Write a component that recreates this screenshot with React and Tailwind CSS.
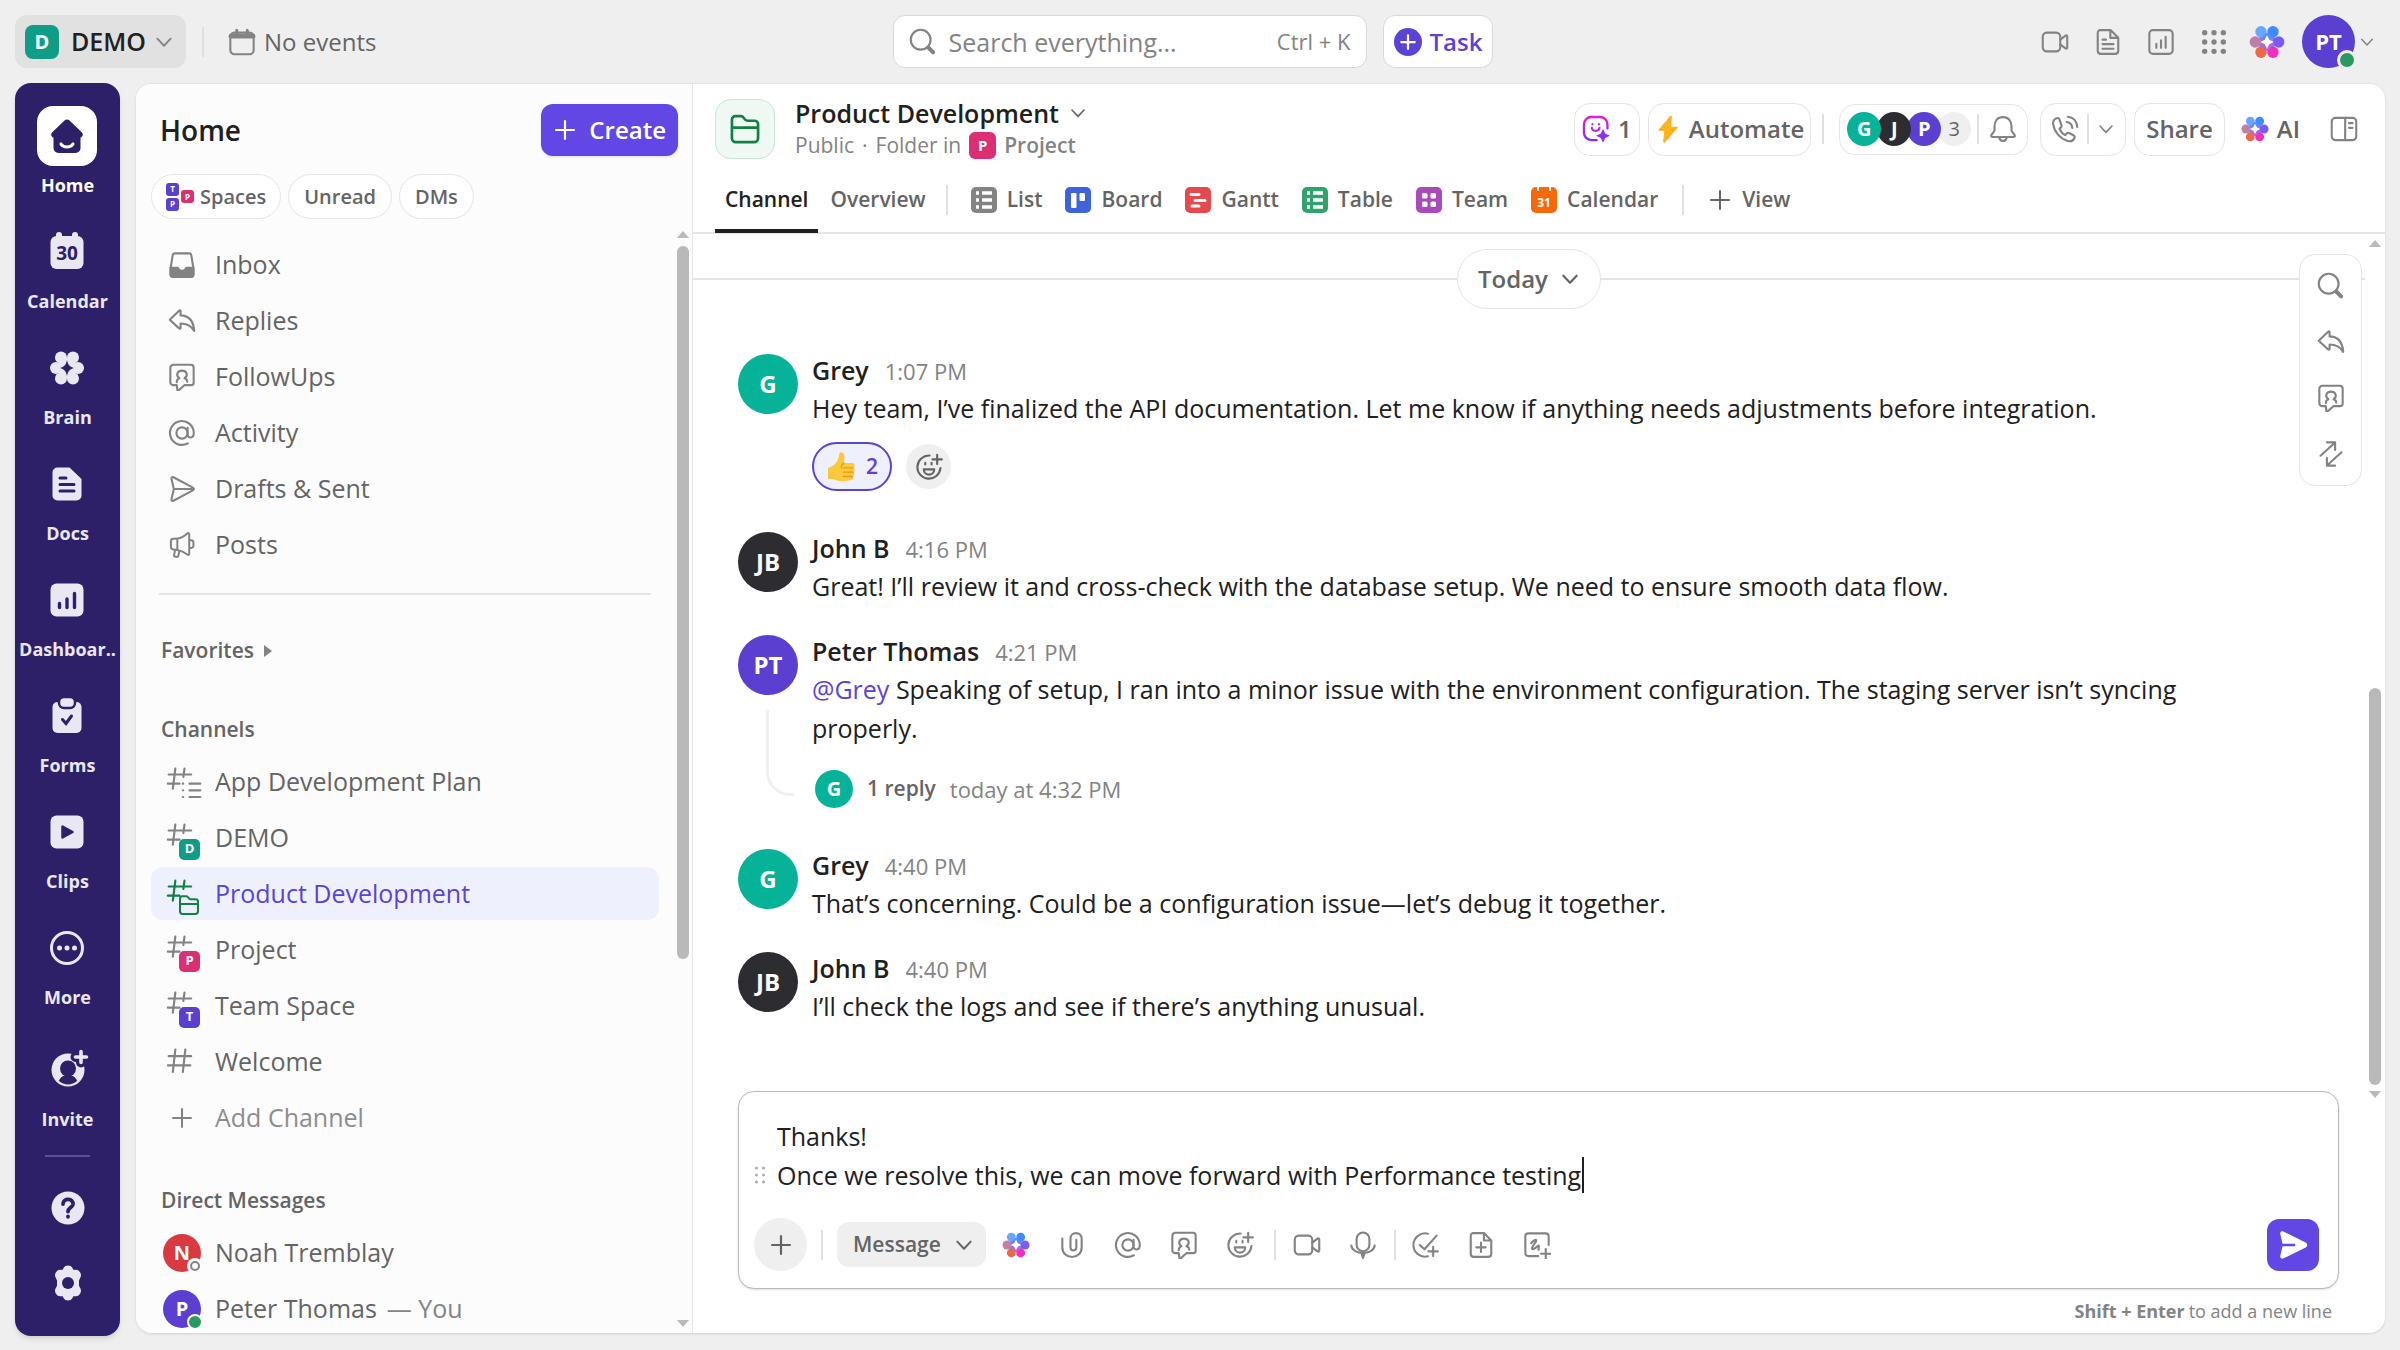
import { useState } from "react";

/* ---------- icons ---------- */

function Icon({ className = "size-7", sw = 1.8, children }) {
  return (
    <svg
      viewBox="0 0 24 24"
      className={`shrink-0 ${className}`}
      fill="none"
      stroke="currentColor"
      strokeWidth={sw}
      strokeLinecap="round"
      strokeLinejoin="round"
      aria-hidden="true"
    >
      {children}
    </svg>
  );
}

const Chevron = ({ className = "size-5", sw = 2.2 }) => (
  <Icon className={className} sw={sw}>
    <path d="M4 8l8 8.500 8-8.500" />
  </Icon>
);

const Plus = ({ className, sw }) => (
  <Icon className={className} sw={sw}>
    <path d="M12 3v18M3 12h18" />
  </Icon>
);

const SearchIcon = ({ className }) => (
  <Icon className={className}>
    <circle cx="10" cy="10" r="8.500" />
    <path d="M16.500 16.700l4.200 4.200" strokeWidth="3.400" />
  </Icon>
);

const CalendarIcon = () => (
  <Icon>
    <rect x="2" y="4" width="20" height="18.500" rx="3.500" />
    <path d="M2.500 7h19" strokeWidth="4" />
    <path d="M7.500 2v4M16.500 2v4" strokeWidth="2.600" />
  </Icon>
);

const InboxIcon = () => (
  <Icon>
    <path d="M2.200 15L4 3.800C4.200 2.500 5 2 6 2h12c1 0 1.800.5 2 1.800L21.800 15v5a2.300 2.300 0 0 1-2.300 2.300h-15A2.300 2.300 0 0 1 2.200 20z" />
    <path
      d="M2.200 14.500h6c.8 0 .8 2.500 3.800 2.500s3-2.500 3.800-2.500h6V20a2.300 2.300 0 0 1-2.300 2.300h-15A2.300 2.300 0 0 1 2.200 20z"
      fill="currentColor"
    />
  </Icon>
);

const ReplyIcon = () => (
  <Icon>
    <path d="M1.500 11L9.500 3.300c.8-.7 1.300-.3 1.300.6v3.300c7 .2 11 4.300 11.700 13.300-2.500-4.300-6-6.300-11.700-6.300v3.500c0 1-.6 1.300-1.300.6z" />
  </Icon>
);

const FollowIcon = () => (
  <Icon>
    <path d="M7.500 19H4.600A2.600 2.600 0 0 1 2 16.400V4.100A2.600 2.600 0 0 1 4.600 1.500h15A2.400 2.400 0 0 1 22 3.900V17c0 1.200-.9 2-2.100 2H14l-4.500 4.200c-.8.700-1.700.200-1.500-.700z" />
    <path d="M7.500 16.500c0-2 .8-3 2.300-3.400C6 10 8.500 6.500 12 6.500s6 3.500 2.200 6.600c1.500.4 2.300 1.400 2.300 3" />
  </Icon>
);

const AtIcon = () => (
  <Icon>
    <circle cx="12" cy="12" r="4.800" />
    <path d="M16.800 7.500V13c0 4 5.300 4 5.300-1A10.200 10.200 0 1 0 17 20.800" />
  </Icon>
);

const SendOutline = () => (
  <Icon>
    <path d="M3 3.300c-.3-1.300.6-1.900 1.700-1.400l16.600 8.900c1.200.6 1.200 1.800 0 2.400L4.700 22.100c-1.100.5-2-.1-1.700-1.400L5 12zM5 12h16.500" />
  </Icon>
);

const MegaphoneIcon = () => (
  <Icon sw={1.7}>
    <path d="M2.500 9c0-1.500.8-2.200 2-2.300L8 6.400c3-.3 6-1.700 8.500-4.200.9-.8 1.700-.5 1.700.6v16.500c0 1.200-.8 1.500-1.700.8-2.500-2-5.500-3.400-8.500-3.900l-3.500-.3c-1.200-.1-2-.8-2-2.300zM8 6.500v9.500M18.300 8h1.500c1.300 0 2 .8 2 2v2.500c0 1.200-.7 2-2 2h-1.500M6 16.500l-.8 4.300c-.2 1.400 3.300 2 3.600.6L9.800 17" />
  </Icon>
);

const VideoIcon = () => (
  <Icon>
    <rect x="1.500" y="4" width="15" height="16" rx="3.500" />
    <path d="M16.500 10l4.500-3.500c.8-.5 1.500-.2 1.500.7v9.600c0 .9-.7 1.200-1.500.7L16.500 14" />
  </Icon>
);

const DocIcon = () => (
  <Icon>
    <path d="M5.500 1.800h8.700l6.600 6.600v11.100c0 1.700-1 2.700-2.700 2.700H5.900c-1.700 0-2.700-1-2.700-2.700v-15c0-1.700.8-2.700 2.300-2.700zM14 2v6.500h6.500M7.300 10h3M7.300 13.800h9.400M7.300 17.800h9.400" />
  </Icon>
);

const ChartIcon = () => (
  <Icon>
    <rect x="2" y="1.800" width="20" height="20.400" rx="3" />
    <path d="M8 13.500V17M12 10.500V17M16 7.500V17" />
  </Icon>
);

const GridIcon = () => (
  <Icon>
    {[4, 12, 20].map((y) =>
      [4, 12, 20].map((x) => (
        <circle key={`${x}-${y}`} cx={x} cy={y} r="2.300" fill="currentColor" stroke="none" />
      ))
    )}
  </Icon>
);

const PETALS = [
  { x: 8, y: 5.2, c: "#6aa5ff" },
  { x: 16, y: 5.2, c: "#3d8bff" },
  { x: 19.8, y: 12, c: "#7a5cf5" },
  { x: 16, y: 18.8, c: "#f02fc0" },
  { x: 8, y: 18.8, c: "#ea6a45" },
  { x: 4.2, y: 12, c: "#c07fa8" },
];

const BrainIcon = ({ className = "size-8" }) => (
  <svg viewBox="0 0 24 24" className={`shrink-0 ${className}`} aria-hidden="true">
    <circle cx="12" cy="12" r="6" fill="#8f78e8" />
    {PETALS.map((p) => (
      <circle key={p.c} cx={p.x} cy={p.y} r="3.800" fill={p.c} />
    ))}
    <circle cx="12" cy="9" r="2.600" fill="#5d8dfb" />
    <circle cx="12" cy="15" r="2.600" fill="#c65ccf" />
    <path d="M12 7.500l1.500 3 3 1.500-3 1.500-1.500 3-1.500-3-3-1.500 3-1.500z" fill="#fff" />
  </svg>
);

const FolderIcon = ({ className, sw = 2 }) => (
  <Icon className={className} sw={sw}>
    <path d="M2.200 9.500V5A2.600 2.600 0 0 1 4.800 2.400h4.400c2.300 0 2 3.400 4.500 3.400h5.500A2.600 2.600 0 0 1 21.800 8.400v10.500a2.900 2.900 0 0 1-2.900 2.900H5.100a2.900 2.900 0 0 1-2.900-2.900zM2.200 11h19.600" />
  </Icon>
);

const HashIcon = ({ children, cut, className = "" }) => (
  <Icon className={`size-10 overflow-visible ${className}`} sw={1.3}>
    {cut ? (
      <path d="M8 4L6.500 16M13.500 4l-.7 5M4 7.500h13.500M3.500 13h7" />
    ) : (
      <path d="M8 4.500L6.500 18M14 4.500L12.500 18M4 8.500h13.500M3.500 14h13.500" />
    )}
    {children}
  </Icon>
);

const ClipIcon = () => (
  <Icon>
    <path d="M3.700 6.500V14c0 11 16.600 11 16.600 0V6.500c0-6.200-9.600-6.200-9.600 0V14c0 3.600 5 3.600 5 0V7.500" />
  </Icon>
);

const EmojiPlus = ({ className }) => (
  <Icon className={className}>
    <path d="M12.500 2.200A9.900 9.900 0 1 0 21.800 13" />
    <path d="M7.500 14h9c0 6-9 6-9 0zM8.800 8.500v1.300M14.200 8.500v1.300M19 1.500v8M15 5.500h8" />
  </Icon>
);

const MicIcon = () => (
  <Icon>
    <rect x="6.500" y="1.300" width="11" height="16" rx="5.500" />
    <path d="M2 12.500c1 8.500 19 8.500 20 0M10.800 19.500L12 23l1.200-3.500z" />
  </Icon>
);

const CheckPlus = () => (
  <Icon>
    <path d="M14.500 2.300a10 10 0 1 0 0 19.400M7.500 12l4 3.700L22 4M19 13.500v8M15 17.500h8" />
  </Icon>
);

const FilePlus = () => (
  <Icon>
    <path d="M5.500 1.800h9l6.300 6.300v11.400c0 1.700-1 2.700-2.700 2.700H5.900c-1.700 0-2.700-1-2.700-2.700v-15c0-1.700.8-2.700 2.300-2.700zM14.500 2v6.200h6.200M12 10v8M8 14h8" />
  </Icon>
);

const BoardPlus = () => (
  <Icon>
    <path d="M13 21.500H4.500A2.500 2.500 0 0 1 2 19V4.500A2.500 2.500 0 0 1 4.500 2h15A2.500 2.500 0 0 1 22 4.500V12M19.500 15.500v8M15.500 19.500h8" />
    <path d="M7 10.500c3.500-4 5.500-3.500 3.500-.5s-4 5.500-2 5.500c2.500 0 4-3.500 5-3s-1 3.500 0 3.500" />
  </Icon>
);

const BellIcon = () => (
  <Icon>
    <path d="M12 1.800c-5 0-7.300 3.500-7.300 8v3.700L2 17.300c-.5.9 0 1.500.9 1.500h18.200c.9 0 1.400-.6.9-1.500l-2.700-3.800V9.800c0-4.500-2.300-8-7.300-8zM8.800 19c.3 4.300 6.100 4.300 6.400 0" />
  </Icon>
);

const PhoneIcon = () => (
  <Icon>
    <path d="M9 8.800L7.200 3.700c-.4-1-1.300-1.300-2.300-1C2.300 3.600 1.500 5.500 1.900 8c1 6.500 5.800 12.300 12.400 14.200 2.500.7 4.700-.1 5.800-2.500.5-1 .1-1.800-.8-2.300l-3.800-2c-.9-.4-1.600-.2-2.200.5l-1.100 1.400c-2.400-1.300-4-3.200-4.900-5.700l1.200-1c.6-.5.8-1 .5-1.800zM14.500 1.500c4.700.5 7.800 3.800 8 8.800M13.500 6c3 .3 4.500 2.200 4.700 5" />
  </Icon>
);

const PanelIcon = () => (
  <Icon>
    <rect x="1.500" y="2.500" width="21" height="19" rx="3" />
    <path d="M13 2.500v19M16.300 7h3M16.300 11h3" />
  </Icon>
);

const SwapIcon = () => (
  <Icon>
    <path d="M3 13.500L15 2.500M8.500 2h7v6.500M21 10.500L9 21.500M15.500 22h-7v-6.500" />
  </Icon>
);

const BotIcon = () => (
  <svg viewBox="0 0 24 24" className="size-7 shrink-0" fill="none" strokeLinecap="round" aria-hidden="true">
    <defs>
      <linearGradient id="bot" x1="0" y1="0" x2="0" y2="1">
        <stop offset="0" stopColor="#e61ed2" />
        <stop offset="1" stopColor="#7b2ff7" />
      </linearGradient>
    </defs>
    <path
      d="M12.500 21.500H8A6.300 6.300 0 0 1 1.700 15.200V8A6.300 6.300 0 0 1 8 1.700h7.500A6.300 6.300 0 0 1 21.800 8v3.500"
      stroke="url(#bot)"
      strokeWidth="2"
    />
    <path d="M8.500 11c0 3.500 6.500 3.500 6.500 0M9 7.800v.4M14.500 7.800v.4" stroke="#c425dc" strokeWidth="1.800" />
    <path d="M18 13l1.500 3.300 3.300 1.500-3.300 1.500L18 22.600l-1.500-3.300-3.300-1.500 3.300-1.500z" fill="#8a2ff0" stroke="#8a2ff0" />
  </svg>
);

const BoltIcon = () => (
  <svg viewBox="0 0 24 24" className="size-7 shrink-0" aria-hidden="true">
    <path
      d="M13 1.500L3.500 13h5l-1 9.500c0 .8.600.9 1 .4L19 10.500h-6l1-8.600c0-.8-.6-.9-1-.4z"
      fill="#ffb11b"
      stroke="#ffb11b"
      strokeLinejoin="round"
    />
  </svg>
);

const ThumbIcon = () => (
  <svg viewBox="0 0 24 24" className="size-8 shrink-0" aria-hidden="true">
    <path
      d="M1.500 12.500c2.800-.6 4.500-1.500 5.700-3.300 1.400-2 2.200-3.300 2.500-5.500.2-2.300.8-3.200 2.300-2.700 2 .7 2.500 3.500 1.200 8h6.500c1.800 0 2.500 2.300.9 3.300 1.400.7 1.400 2.700 0 3.300 1 .8.900 2.600-.5 3.200.8 1 .2 2.900-1.500 3.200-4 .8-8.600 1-11.600-.5-1.600-.7-3.500-.6-5.500-.5z"
      fill="#fdc93c"
    />
    <path d="M13 12.600h7.300M13 15.900h7.300M13 19.100h6.700" stroke="#e59a1c" strokeWidth="1" strokeLinecap="round" />
    <path d="M13.200 9c-1 1-1.700 2-1.800 3.600" stroke="#e59a1c" fill="none" strokeLinecap="round" />
  </svg>
);

/* Filled glyphs of the left rail. Cut-outs take the rail's own purple. */
const RAIL_BG = "#2d2069";

const RailSvg = ({ children }) => (
  <svg viewBox="0 0 40 40" className="size-10 overflow-visible" fill="#e9e8f2" aria-hidden="true">
    {children}
  </svg>
);

const railGlyphs = {
  home: (
    <g fill={RAIL_BG}>
      <path d="M17.500 4.500c1.500-1.300 3.500-1.300 5 0l12.500 12c1.500 1.600.8 4.500-1.500 5V32a5 5 0 0 1-5 5H11.500a5 5 0 0 1-5-5V21.500c-2.300-.5-3-3.400-1.500-5z" />
      <path d="M14 28c2.500 4 9.500 4 12 0" stroke="#fff" strokeWidth="3.200" strokeLinecap="round" fill="none" />
    </g>
  ),
  calendar: (
    <>
      <rect x="3.500" y="4" width="33" height="33" rx="6" />
      <rect x="9" y="0" width="6" height="8" rx="3" />
      <rect x="25" y="0" width="6" height="8" rx="3" />
      <text x="20" y="28" textAnchor="middle" fontSize="19" fontWeight="700" fill={RAIL_BG}>
        30
      </text>
    </>
  ),
  brain: (
    <>
      <circle cx="14" cy="9.500" r="6" />
      <circle cx="26" cy="9.500" r="6" />
      <circle cx="31" cy="20" r="6" />
      <circle cx="26" cy="30.500" r="6" />
      <circle cx="14" cy="30.500" r="6" />
      <circle cx="9" cy="20" r="6" />
      <circle cx="20" cy="20" r="10" />
      <path d="M20 12c1 5 3 7 7 8-4 1-6 3-7 8-1-5-3-7-7-8 4-1 6-3 7-8z" fill={RAIL_BG} />
    </>
  ),
  docs: (
    <>
      <path d="M10.500 3.500h12L34.500 15v16.500a5 5 0 0 1-5 5h-19a5 5 0 0 1-5-5v-23a5 5 0 0 1 5-5z" />
      <path d="M13 14h6M13 20.500h14M13 27h14" stroke={RAIL_BG} strokeWidth="3" strokeLinecap="round" />
    </>
  ),
  dashboards: (
    <>
      <rect x="3.500" y="3.500" width="33" height="33" rx="6" />
      <path d="M12.500 23.500v4M20 19v8.500M27.500 13.500v14" stroke={RAIL_BG} strokeWidth="3.400" strokeLinecap="round" />
    </>
  ),
  forms: (
    <>
      <rect x="5.500" y="6" width="29" height="31" rx="5" />
      <rect x="12" y="1" width="16" height="11" rx="5" stroke={RAIL_BG} strokeWidth="2.500" />
      <path d="M15.500 23.500l3.500 4 5.500-7.500" stroke={RAIL_BG} strokeWidth="3" strokeLinecap="round" fill="none" />
    </>
  ),
  clips: (
    <>
      <rect x="3.500" y="3.500" width="33" height="33" rx="6" />
      <path d="M15.500 14.500v11l10-5.500z" fill={RAIL_BG} stroke={RAIL_BG} strokeWidth="2.500" strokeLinejoin="round" />
    </>
  ),
  more: (
    <>
      <circle cx="20" cy="20" r="15.500" fill="none" stroke="#e9e8f2" strokeWidth="3" />
      <circle cx="12.500" cy="20" r="2.500" />
      <circle cx="20" cy="20" r="2.500" />
      <circle cx="27.500" cy="20" r="2.500" />
    </>
  ),
  invite: (
    <>
      <circle cx="20" cy="20" r="16.500" />
      <circle cx="20" cy="18.500" r="8" fill={RAIL_BG} />
      <path d="M11 31c1-4 5-6 9-6s8 2 9 6c-5 4.500-13 4.500-18 0z" fill={RAIL_BG} />
      <path d="M33 1.500v11M27.500 7h11" stroke={RAIL_BG} strokeWidth="10" strokeLinecap="round" />
      <path d="M33 1.500v11M27.500 7h11" stroke="#e9e8f2" strokeWidth="3.600" strokeLinecap="round" />
    </>
  ),
  help: (
    <>
      <circle cx="20" cy="20" r="16.500" />
      <path
        d="M15 16c0-6.500 11-6 10 .5-.6 3-5 3.500-5 7M20 28.500v.3"
        stroke={RAIL_BG}
        strokeWidth="3.800"
        strokeLinecap="round"
        fill="none"
      />
    </>
  ),
  settings: (
    <>
      <path
        d="M17 5.500c1-2 5-2 6 0l1.500 3 3.300-.3c2.300-.2 4.500 3.500 3.300 5.500L29.500 17v6l1.600 3.300c1.200 2-1 5.700-3.300 5.500l-3.300-.3-1.500 3c-1 2-5 2-6 0l-1.500-3-3.300.3C9.900 32 7.700 28.300 8.900 26.300L10.500 23v-6l-1.600-3.300c-1.200-2 1-5.700 3.300-5.500l3.300.3z"
        stroke="#e9e8f2"
        strokeWidth="3"
        strokeLinejoin="round"
      />
      <circle cx="20" cy="20" r="6" fill={RAIL_BG} />
    </>
  ),
};

/* ---------- small pieces ---------- */

function Tile({ letter, className }) {
  return (
    <span className={`flex shrink-0 items-center justify-center font-bold text-white ${className}`}>{letter}</span>
  );
}

function Avatar({ initials, color, className }) {
  return (
    <span className={`flex shrink-0 items-center justify-center rounded-full font-bold text-white ${color} ${className}`}>
      {initials}
    </span>
  );
}

const Divider = ({ className = "" }) => <span className={`h-[30px] w-0.5 shrink-0 bg-[#e0e0e0] ${className}`} />;

function Scrollbar({ className = "", top, thumb }) {
  return (
    <div className={`flex flex-col items-center ${className}`} aria-hidden="true">
      <span className="border-x-[6px] border-b-[7px] border-x-transparent border-b-[#b9b9b9]" />
      <div className="flex w-3 flex-1 flex-col">
        <span className={top} />
        <span className={`rounded-full bg-[#b9b9b9] ${thumb}`} />
      </div>
      <span className="border-x-[6px] border-t-[7px] border-x-transparent border-t-[#b9b9b9]" />
    </div>
  );
}

/* ---------- top bar ---------- */

function TopBar() {
  return (
    <header className="grid h-[83px] shrink-0 grid-cols-[1fr_auto_1fr] items-center pr-[25px] pl-[15px]">
      <div className="flex items-center">
        <button className="flex h-[53px] items-center rounded-xl bg-[#e1e1e1] pr-3 pl-2.5 text-[25px] font-semibold text-[#202020]">
          <Tile letter="D" className="size-[34px] rounded-lg bg-[#0f9d88] text-[20px]" />
          <span className="ml-3">DEMO</span>
          <span className="ml-2 text-[#838383]">
            <Chevron />
          </span>
        </button>
        <Divider className="ml-4 bg-[#cfcfcf]" />
        <button className="ml-6 flex items-center gap-2 text-[24px] text-[#646464]">
          <span className="text-[#838383]">
            <CalendarIcon />
          </span>
          No events
        </button>
      </div>

      <div className="flex items-center gap-4 pr-1">
        <label className="flex h-[53px] w-[474px] items-center rounded-xl border border-[#d9d9d9] bg-white px-[15px] text-[#838383]">
          <SearchIcon />
          <span className="sr-only">Search</span>
          <input
            type="search"
            placeholder="Search everything..."
            className="ml-2 h-11 min-w-0 flex-1 bg-transparent px-1 text-[25px] outline-none placeholder:text-[#838383]"
          />
          <kbd className="font-[inherit] text-[22px]">Ctrl + K</kbd>
        </label>
        <button className="flex h-[53px] items-center gap-2 rounded-xl border border-[#d9d9d9] bg-white px-2.5 text-[24px] font-semibold text-[#5a43d6]">
          <span className="flex size-7 items-center justify-center rounded-full bg-[#5a43d6] text-white">
            <Plus className="size-[18px]" sw={3} />
          </span>
          Task
        </button>
      </div>

      <div className="flex items-center justify-end gap-[25px] text-[#838383]">
        <button aria-label="Start meeting"><VideoIcon /></button>
        <button aria-label="Notepad"><DocIcon /></button>
        <button aria-label="Dashboards"><ChartIcon /></button>
        <button aria-label="Apps"><GridIcon /></button>
        <button aria-label="Brain" className="-mr-2 -ml-1"><BrainIcon className="size-9" /></button>
        <button className="flex items-center gap-1" aria-label="Account">
          <span className="relative">
            <Avatar initials="PT" color="bg-[#5a3fd0]" className="size-[53px] text-[22px]" />
            <span className="absolute -right-0.5 -bottom-0.5 size-5 rounded-full border-[3px] border-[#efefef] bg-[#2a9960]" />
          </span>
          <Chevron className="size-4" />
        </button>
      </div>
    </header>
  );
}

/* ---------- rail ---------- */

const railItems = [
  { id: "home", label: "Home", active: true },
  { id: "calendar", label: "Calendar" },
  { id: "brain", label: "Brain" },
  { id: "docs", label: "Docs" },
  { id: "dashboards", label: "Dashboar.." },
  { id: "forms", label: "Forms" },
  { id: "clips", label: "Clips" },
  { id: "more", label: "More" },
];

function RailItem({ id, label, active }) {
  return (
    <button className={`flex flex-col items-center gap-[7px] text-[18px] leading-6 font-bold ${active ? "text-white" : "text-[#e9e8f2]"}`}>
      <span className={`flex size-[60px] items-center justify-center rounded-2xl ${active ? "bg-white" : ""}`}>
        <RailSvg>{railGlyphs[id]}</RailSvg>
      </span>
      {label}
    </button>
  );
}

function Rail() {
  return (
    <nav className="flex w-[105px] shrink-0 flex-col items-center rounded-2xl bg-[#2d2069] pt-[23px] shadow-md">
      <div className="flex flex-col gap-[25px]">
        {railItems.map((item) => (
          <RailItem key={item.id} {...item} />
        ))}
      </div>
      <div className="mt-[31px]">
        <RailItem id="invite" label="Invite" />
      </div>
      <span className="mt-6 h-0.5 w-[45px] bg-[#5a5093]" />
      <button aria-label="Help" className="mt-[21px] flex size-[60px] items-center justify-center">
        <RailSvg>{railGlyphs.help}</RailSvg>
      </button>
      <button aria-label="Settings" className="mt-[15px] flex size-[60px] items-center justify-center">
        <RailSvg>{railGlyphs.settings}</RailSvg>
      </button>
    </nav>
  );
}

/* ---------- sidebar ---------- */

const links = [
  { label: "Inbox", icon: <InboxIcon /> },
  { label: "Replies", icon: <ReplyIcon /> },
  { label: "FollowUps", icon: <FollowIcon /> },
  { label: "Activity", icon: <AtIcon /> },
  { label: "Drafts & Sent", icon: <SendOutline /> },
  { label: "Posts", icon: <MegaphoneIcon /> },
];

const channels = [
  { label: "App Development Plan", list: true },
  { label: "DEMO", tile: "D", color: "bg-[#0f9d88]" },
  { label: "Product Development", folder: true, active: true },
  { label: "Project", tile: "P", color: "bg-[#dc2f73]" },
  { label: "Team Space", tile: "T", color: "bg-[#5a3fd0]" },
  { label: "Welcome" },
];

function Row({ icon, active, muted, children }) {
  return (
    <a
      href="#"
      className={`flex h-[53px] items-center rounded-xl pl-2.5 text-[25px] whitespace-nowrap ${
        active ? "bg-[#eff0fd] text-[#5a43d6]" : muted ? "text-[#8d8d8d]" : "text-[#646464]"
      }`}
    >
      <span className="mr-3 flex w-[42px] shrink-0 items-center justify-center text-[#838383]">{icon}</span>
      {children}
    </a>
  );
}

function ChannelIcon({ list, folder, tile, color }) {
  return (
    <span className="relative flex size-10 items-center justify-center">
      <HashIcon cut={list || folder || tile} className={folder ? "text-[#108043]" : ""}>
        {list && <path d="M12.500 13h.2M12.500 17h.2M12.500 21h.2M16.500 13h6.500M16.500 17h6.500M16.500 21h6.500" />}
      </HashIcon>
      {folder && (
        <span className="absolute right-0.5 -bottom-0.5 text-[#108043]">
          <FolderIcon className="size-[22px]" sw={2.2} />
        </span>
      )}
      {tile && <Tile letter={tile} className={`absolute right-0.5 -bottom-0.5 size-[21px] rounded-[5px] text-[13px] ${color}`} />}
    </span>
  );
}

function Sidebar() {
  return (
    <aside className="flex w-[557px] shrink-0 flex-col border-r border-[#e5e5e5] bg-[#fcfcfc]">
      <div className="flex items-center justify-between pt-5 pr-[14px] pl-6">
        <h1 className="text-[28px] font-semibold text-[#202020]">Home</h1>
        <button className="flex h-[52px] items-center gap-3 rounded-xl bg-[#6247e5] px-3 text-[24px] font-semibold text-white shadow">
          <Plus className="size-6" sw={2.2} />
          Create
        </button>
      </div>

      <div className="flex gap-[7px] pt-[18px] pb-3 pl-[15px] text-[20px] font-semibold text-[#646464]">
        <button className="flex h-[45px] items-center rounded-full border border-[#e5e5e5] bg-white px-3.5">
          <span className="mr-1.5 flex items-center gap-0.5">
            <span className="flex flex-col gap-0.5">
              <Tile letter="T" className="size-[13px] rounded-[3px] bg-[#5a3fd0] text-[8px]" />
              <Tile letter="P" className="size-[13px] rounded-[3px] bg-[#5a3fd0] text-[8px]" />
            </span>
            <Tile letter="P" className="size-[13px] rounded-[3px] bg-[#dc2f73] text-[8px]" />
          </span>
          Spaces
        </button>
        <button className="h-[45px] rounded-full border border-[#e5e5e5] bg-white px-[15px]">Unread</button>
        <button className="h-[45px] rounded-full border border-[#e5e5e5] bg-white px-[15px]">DMs</button>
      </div>

      <div className="flex min-h-0 flex-1">
        <div className="min-w-0 flex-1 overflow-hidden pt-[7px] pr-[18px] pl-[15px]">
          <div className="flex flex-col gap-[3px]">
            {links.map((l) => (
              <Row key={l.label} icon={l.icon}>
                {l.label}
              </Row>
            ))}
          </div>
          <hr className="mt-[22px] mr-2 ml-2 border-t-2 border-[#e5e5e5]" />

          <button className="mt-10 flex h-8 items-center gap-2.5 pl-2.5 text-[21px] font-semibold text-[#646464]">
            Favorites
            <svg viewBox="0 0 8 12" className="h-3 w-2" fill="#838383" aria-hidden="true">
              <path d="M0 0l8 6-8 6z" />
            </svg>
          </button>

          <h2 className="mt-[46px] mb-2.5 h-8 pl-2.5 text-[21px] leading-8 font-semibold text-[#646464]">Channels</h2>
          <div className="flex flex-col gap-[3px]">
            {channels.map((c) => (
              <Row key={c.label} active={c.active} icon={<ChannelIcon {...c} />}>
                {c.label}
              </Row>
            ))}
            <Row muted icon={<Plus className="size-6" sw={2} />}>
              Add Channel
            </Row>
          </div>

          <h2 className="mt-10 mb-2.5 h-8 pl-2.5 text-[21px] leading-8 font-semibold text-[#646464]">Direct Messages</h2>
          <div className="flex flex-col gap-[3px]">
            <Row
              icon={
                <span className="relative">
                  <Avatar initials="N" color="bg-[#d93a41]" className="size-[38px] text-[20px]" />
                  <span className="absolute -right-0.5 -bottom-0.5 size-4 rounded-full bg-[#fcfcfc] p-[3px]">
                    <span className="block size-2.5 rounded-full border-2 border-[#838383]" />
                  </span>
                </span>
              }
            >
              Noah Tremblay
            </Row>
            <Row
              icon={
                <span className="relative">
                  <Avatar initials="P" color="bg-[#5a3fd0]" className="size-[38px] text-[20px]" />
                  <span className="absolute -right-0.5 -bottom-0.5 size-4 rounded-full border-2 border-[#fcfcfc] bg-[#2a9960]" />
                </span>
              }
            >
              Peter Thomas <span className="ml-2.5 text-[#838383]">— You</span>
            </Row>
          </div>
        </div>
        <Scrollbar className="mr-[3px] pb-1.5" top="h-2" thumb="h-[713px]" />
      </div>
    </aside>
  );
}

/* ---------- channel header ---------- */

const ViewTile = ({ color, children }) => (
  <svg viewBox="0 0 26 26" className="size-[26px] shrink-0" aria-hidden="true">
    <rect width="26" height="26" rx="5" fill={color} />
    {children}
  </svg>
);

const listRows = (
  <path d="M5 6h3M5 13h3M5 20h3M11 6h10M11 13h10M11 20h10" stroke="#fff" strokeWidth="3.400" />
);

const views = [
  { label: "List", icon: <ViewTile color="#838383">{listRows}</ViewTile> },
  {
    label: "Board",
    icon: (
      <ViewTile color="#3e63dd">
        <rect x="6" y="6" width="5.500" height="15" rx="1" fill="#fff" />
        <rect x="14.500" y="6" width="5.500" height="8" rx="1" fill="#fff" />
      </ViewTile>
    ),
  },
  {
    label: "Gantt",
    icon: (
      <ViewTile color="#e5484d">
        <path d="M6 7.500h8M10 13.500h10M7 19h7" stroke="#fff" strokeWidth="3" strokeLinecap="round" />
      </ViewTile>
    ),
  },
  { label: "Table", icon: <ViewTile color="#30a46c">{listRows}</ViewTile> },
  {
    label: "Team",
    icon: (
      <ViewTile color="#ab4aba">
        <rect x="6" y="6" width="5.500" height="5.500" rx="1.500" fill="#fff" />
        <rect x="14.500" y="6" width="5.500" height="5.500" rx="1.500" fill="#fff" />
        <rect x="6" y="14.500" width="5.500" height="5.500" rx="1.500" fill="#fff" />
        <rect x="14.500" y="14.500" width="5.500" height="5.500" rx="1.500" fill="#fff" />
      </ViewTile>
    ),
  },
  {
    label: "Calendar",
    icon: (
      <ViewTile color="#f76808">
        <path d="M7 0v4M19 0v4" stroke="#fff" strokeWidth="2" />
        <text x="13" y="20" textAnchor="middle" fontSize="12" fontWeight="700" fill="#fff">
          31
        </text>
      </ViewTile>
    ),
  },
];

function ChannelHeader() {
  return (
    <div className="shrink-0 pt-[15px]">
      <div className="flex h-[60px] items-center pr-[27px] pl-[22px]">
        <span className="flex size-[60px] items-center justify-center rounded-2xl border border-[#c9e5d6] bg-[#f0f8f4] text-[#108043]">
          <FolderIcon className="size-8" />
        </span>
        <div className="ml-5 flex-1">
          <button className="flex items-center gap-2.5 text-[25px] leading-8 font-semibold text-[#202020]">
            Product Development
            <span className="text-[#646464]">
              <Chevron className="size-[18px]" />
            </span>
          </button>
          <p className="flex items-center text-[21px] leading-8 text-[#838383]">
            Public <span className="mx-2">·</span> Folder in
            <Tile letter="P" className="mx-2 size-[27px] rounded-md bg-[#dc2f73] text-[15px]" />
            <a href="#" className="font-semibold">Project</a>
          </p>
        </div>

        <div className="flex items-center text-[24px] font-semibold text-[#646464]">
          <button className="flex h-[53px] items-center gap-2 rounded-2xl border border-[#e5e5e5] px-[7px]">
            <BotIcon />1
          </button>
          <button className="ml-2 flex h-[53px] items-center gap-1.5 rounded-2xl border border-[#e5e5e5] px-1.5">
            <BoltIcon />
            Automate
          </button>
          <Divider className="mx-[11px]" />
          <div className="ml-1 flex h-[51px] items-center rounded-2xl border border-[#e5e5e5] pr-2.5 pl-[7px]">
            <Avatar initials="G" color="bg-[#06b398]" className="z-30 size-[34px] text-[20px]" />
            <Avatar initials="J" color="bg-[#2d2d31]" className="z-20 -ml-1 size-[34px] text-[20px]" />
            <Avatar initials="P" color="bg-[#5a3fd0]" className="z-10 -ml-1 size-[34px] text-[20px]" />
            <span className="-ml-1 flex size-[34px] items-center justify-center rounded-full bg-[#efefef] text-[20px] font-normal">3</span>
            <Divider className="mr-2.5 ml-1.5" />
            <button aria-label="Notifications" className="text-[#838383]"><BellIcon /></button>
          </div>
          <div className="ml-3 flex h-[53px] items-center rounded-2xl border border-[#e5e5e5] px-2.5 text-[#838383]">
            <button aria-label="Call"><PhoneIcon /></button>
            <Divider className="mr-2 ml-2" />
            <button aria-label="Call options"><Chevron className="size-[18px]" /></button>
          </div>
          <button className="ml-2 h-[53px] rounded-2xl border border-[#e5e5e5] px-[11px]">Share</button>
          <button className="ml-4 flex items-center gap-2">
            <BrainIcon className="size-7" />
            AI
          </button>
          <button aria-label="Toggle panel" className="ml-[30px] text-[#838383]"><PanelIcon /></button>
        </div>
      </div>

      <div className="flex h-[75px] items-center border-b-2 border-[#e5e5e5] pt-2 pl-[22px] text-[21px] font-semibold text-[#646464]">
        <button className="relative -mt-2 h-[73px] px-2.5 pt-2 text-[#202020]">
          Channel
          <span className="absolute inset-x-0 -bottom-px h-1 bg-[#202020]" />
        </button>
        <button className="ml-3">Overview</button>
        <Divider className="mr-[23px] ml-5" />
        <div className="flex gap-[23px]">
          {views.map((v) => (
            <button key={v.label} className="flex items-center gap-2.5">
              {v.icon}
              {v.label}
            </button>
          ))}
        </div>
        <Divider className="mr-6 ml-6" />
        <button className="flex items-center gap-2.5">
          <Plus className="size-6" sw={2} />
          View
        </button>
      </div>
    </div>
  );
}

/* ---------- messages ---------- */

const people = {
  Grey: { initials: "G", color: "bg-[#06b398]" },
  "John B": { initials: "JB", color: "bg-[#2d2d31]" },
  "Peter Thomas": { initials: "PT", color: "bg-[#5a3fd0]" },
};

const messages = [
  {
    from: "Grey",
    time: "1:07 PM",
    text: "Hey team, I’ve finalized the API documentation. Let me know if anything needs adjustments before integration.",
    reactions: 2,
  },
  {
    from: "John B",
    time: "4:16 PM",
    text: "Great! I’ll review it and cross-check with the database setup. We need to ensure smooth data flow.",
  },
  {
    from: "Peter Thomas",
    time: "4:21 PM",
    mention: "@Grey",
    text: "Speaking of setup, I ran into a minor issue with the environment configuration. The staging server isn’t syncing properly.",
    reply: { from: "Grey", at: "today at 4:32 PM" },
  },
  {
    from: "Grey",
    time: "4:40 PM",
    text: "That’s concerning. Could be a configuration issue—let’s debug it together.",
  },
  {
    from: "John B",
    time: "4:40 PM",
    text: "I’ll check the logs and see if there’s anything unusual.",
  },
];

function Message({ from, time, text, mention, reactions, reply }) {
  return (
    <article className="flex gap-3.5">
      <div className="flex w-[60px] shrink-0 flex-col">
        <Avatar {...people[from]} className="size-[60px] text-[24px]" />
        {reply && (
          <span className="mt-[15px] mr-1 mb-6 ml-7 flex-1 rounded-bl-3xl border-b-[3px] border-l-[3px] border-[#f0f0f0]" />
        )}
      </div>
      <div className="min-w-0 flex-1 text-[25px] text-[#202020]">
        <p className="flex h-[35px] items-baseline gap-4 leading-8">
          <b className="font-semibold">{from}</b>
          <time className="text-[22px] text-[#838383]">{time}</time>
        </p>
        <p className="leading-[39px]">
          {mention && <span className="text-[#5a43d6]">{mention}</span>} {text}
        </p>
        {reactions && (
          <div className="mt-3.5 mb-3 flex items-center gap-3.5">
            <button className="flex h-[49px] items-center gap-2 rounded-full border-2 border-[#5a43d6] bg-[#eff0fd] px-3 text-[21px] font-semibold text-[#5a43d6]">
              <ThumbIcon />
              {reactions}
            </button>
            <button
              aria-label="Add reaction"
              className="flex size-[45px] items-center justify-center rounded-full bg-[#efefef] text-[#646464]"
            >
              <EmojiPlus className="size-7" />
            </button>
          </div>
        )}
        {reply && (
          <div className="mt-[22px] mb-3 flex h-[38px] items-center gap-3.5 pl-[3px] text-[21px]">
            <Avatar {...people[reply.from]} className="size-[38px] text-[20px]" />
            <a href="#" className="font-semibold text-[#646464]">1 reply</a>
            <span className="text-[22px] text-[#838383]">{reply.at}</span>
          </div>
        )}
      </div>
    </article>
  );
}

function Timeline() {
  return (
    <div className="relative min-h-0 flex-1">
      <div className="flex items-center pt-[15px]">
        <span className="h-0.5 flex-1 bg-[#e5e5e5]" />
        <button className="flex h-[60px] items-center gap-3 rounded-full border border-[#e5e5e5] px-5 text-[24px] font-semibold text-[#646464]">
          Today
          <Chevron sw={2.6} />
        </button>
        <span className="h-0.5 flex-1 bg-[#e5e5e5]" />
      </div>
      <div className="mt-[45px] flex flex-col gap-[29px] pr-[90px] pl-[45px]">
        {messages.map((m) => (
          <Message key={m.from + m.text} {...m} />
        ))}
      </div>

      <div className="absolute top-5 right-[3px] flex w-[63px] flex-col items-center gap-7 rounded-2xl border border-[#e5e5e5] bg-white py-[17px] text-[#838383]">
        <button aria-label="Search messages"><SearchIcon /></button>
        <button aria-label="Replies"><ReplyIcon /></button>
        <button aria-label="FollowUps"><FollowIcon /></button>
        <button aria-label="Synced threads"><SwapIcon /></button>
      </div>
    </div>
  );
}

/* ---------- composer ---------- */

function Composer() {
  const [draft, setDraft] = useState("Thanks!\nOnce we resolve this, we can move forward with Performance testing");

  return (
    <div className="shrink-0 pr-[26px] pl-[45px]">
      <div className="rounded-2xl border border-[#b9b9b9] bg-white px-[15px] pt-[25px] pb-[17px] shadow-sm">
        <div className="relative flex">
          <svg viewBox="0 0 12 18" className="mt-[49px] h-[18px] w-3 shrink-0" fill="#b0b0b0" aria-hidden="true">
            {[2, 9, 16].map((y) => (
              <g key={y}>
                <circle cx="2.500" cy={y} r="1.600" />
                <circle cx="9.500" cy={y} r="1.600" />
              </g>
            ))}
          </svg>
          <label htmlFor="draft" className="sr-only">Message</label>
          <textarea
            id="draft"
            rows={2}
            value={draft}
            onChange={(e) => setDraft(e.target.value)}
            className="ml-[7px] h-[84px] flex-1 resize-none bg-transparent px-1 text-[25px] leading-[39px] text-[#202020] outline-none"
          />
          <span className="absolute top-10 left-[828px] h-9 w-0.5 bg-[#202020]" aria-hidden="true" />
        </div>

        <div className="mt-[17px] flex items-center text-[#838383]">
          <button aria-label="Add" className="flex size-[53px] items-center justify-center rounded-full bg-[#efefef] text-[#646464]">
            <Plus className="size-6" sw={2.2} />
          </button>
          <Divider className="mx-[14px]" />
          <div className="relative">
            <label htmlFor="kind" className="sr-only">Type</label>
            <select
              id="kind"
              className="h-[45px] w-[149px] appearance-none rounded-xl bg-[#efefef] pl-4 text-[21px] font-semibold text-[#646464]"
            >
              <option>Message</option>
              <option>Post</option>
            </select>
            <span className="pointer-events-none absolute top-[13px] right-3 text-[#646464]">
              <Chevron sw={2.4} />
            </span>
          </div>
          <div className="ml-4 flex items-center gap-7">
            <button aria-label="Write with AI"><BrainIcon className="size-7" /></button>
            <button aria-label="Attach"><ClipIcon /></button>
            <button aria-label="Mention"><AtIcon /></button>
            <button aria-label="FollowUp"><FollowIcon /></button>
            <button aria-label="Emoji"><EmojiPlus /></button>
          </div>
          <Divider className="mr-[17px] ml-5" />
          <div className="flex items-center gap-7">
            <button aria-label="Record video"><VideoIcon /></button>
            <button aria-label="Record voice"><MicIcon /></button>
          </div>
          <Divider className="mr-[15px] ml-[17px]" />
          <div className="flex items-center gap-7">
            <button aria-label="Create task"><CheckPlus /></button>
            <button aria-label="Create doc"><FilePlus /></button>
            <button aria-label="Create whiteboard"><BoardPlus /></button>
          </div>
          <button aria-label="Send" className="mr-1 ml-auto flex size-[52px] items-center justify-center rounded-xl bg-[#6247e5]">
            <svg viewBox="0 0 24 24" className="size-8" fill="#fff" aria-hidden="true">
              <path d="M2.500 4c-.5-1.800 1-2.800 2.500-2l16.500 8.200c1.500.8 1.500 2.800 0 3.600L5 22c-1.500.8-3-.2-2.500-2l1.600-7.100H13c1 0 1-1.800 0-1.800H4.100z" />
            </svg>
          </button>
        </div>
      </div>
      <p className="flex h-[44px] items-center justify-end gap-1 pr-[7px] text-[18px] text-[#838383]">
        <b className="font-bold">Shift + Enter</b> to add a new line
      </p>
    </div>
  );
}

export default function App() {
  return (
    <div className="flex h-screen flex-col overflow-hidden bg-[#efefef] font-['Open_Sans','Noto_Sans',sans-serif]">
      <TopBar />
      <div className="flex min-h-0 flex-1 gap-4 pr-[15px] pb-[14px] pl-[15px]">
        <Rail />
        <div className="mb-[3px] flex min-w-0 flex-1 overflow-hidden rounded-2xl border-t border-[#e5e5e5] bg-white shadow-sm">
          <Sidebar />
          <main className="flex min-w-0 flex-1 flex-col">
            <ChannelHeader />
            <div className="flex min-h-0 flex-1">
              <div className="flex min-w-0 flex-1 flex-col">
                <Timeline />
                <Composer />
              </div>
              <Scrollbar className="mr-1 ml-1 pt-1.5 pb-[235px]" top="flex-1" thumb="mb-1.5 h-[397px]" />
            </div>
          </main>
        </div>
      </div>
    </div>
  );
}
